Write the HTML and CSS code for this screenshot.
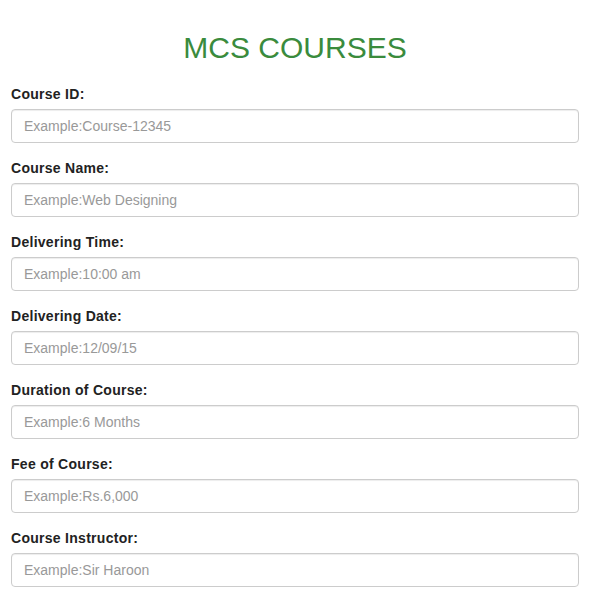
FILE: index.html
```html
<!DOCTYPE html>
<html>
<head>
<meta charset="utf-8">
<link rel="stylesheet" href="styles.css">
</head>
<body>
<div class="page">
  <h2 class="title">MCS COURSES</h2>
  <form class="form">
    <div class="group">
      <label class="label">Course ID:</label>
      <input class="input" type="text" placeholder="Example:Course-12345">
    </div>
    <div class="group">
      <label class="label">Course Name:</label>
      <input class="input" type="text" placeholder="Example:Web Designing">
    </div>
    <div class="group">
      <label class="label">Delivering Time:</label>
      <input class="input" type="text" placeholder="Example:10:00 am">
    </div>
    <div class="group">
      <label class="label">Delivering Date:</label>
      <input class="input" type="text" placeholder="Example:12/09/15">
    </div>
    <div class="group">
      <label class="label">Duration of Course:</label>
      <input class="input" type="text" placeholder="Example:6 Months">
    </div>
    <div class="group">
      <label class="label">Fee of Course:</label>
      <input class="input" type="text" placeholder="Example:Rs.6,000">
    </div>
    <div class="group">
      <label class="label">Course Instructor:</label>
      <input class="input" type="text" placeholder="Example:Sir Haroon">
    </div>
  </form>
</div>
</body>
</html>
```

FILE: styles.css
```css
* { box-sizing: border-box; }
html, body { margin: 0; padding: 0; background: #fff; }
body {
  font-family: "Liberation Sans", Arial, Helvetica, sans-serif;
  font-size: 14px;
  line-height: 20px;
  color: #333;
}
.page {
  padding: 0 13px 0 11px;
}
.title {
  margin: 31px 0 20px;
  font-size: 30px;
  line-height: 33px;
  font-weight: 400;
  text-align: center;
  color: #3a8b3d;
}
.form {
  display: flex;
  flex-direction: column;
  gap: 15px;
}
.group {
  display: flex;
  flex-direction: column;
}
.label {
  font-weight: 700;
  margin-bottom: 5px;
  letter-spacing: 0.28px;
  color: #222;
}
.input {
  display: block;
  width: 100%;
  height: 34px;
  padding: 6px 12px;
  font-family: inherit;
  font-size: 14px;
  line-height: 20px;
  color: #555;
  background: #fff;
  border: 1px solid #ccc;
  border-radius: 4px;
  box-shadow: inset 0 1px 1px rgba(0,0,0,0.075);
  outline: none;
}
.input::placeholder { color: #999; opacity: 1; }
```
